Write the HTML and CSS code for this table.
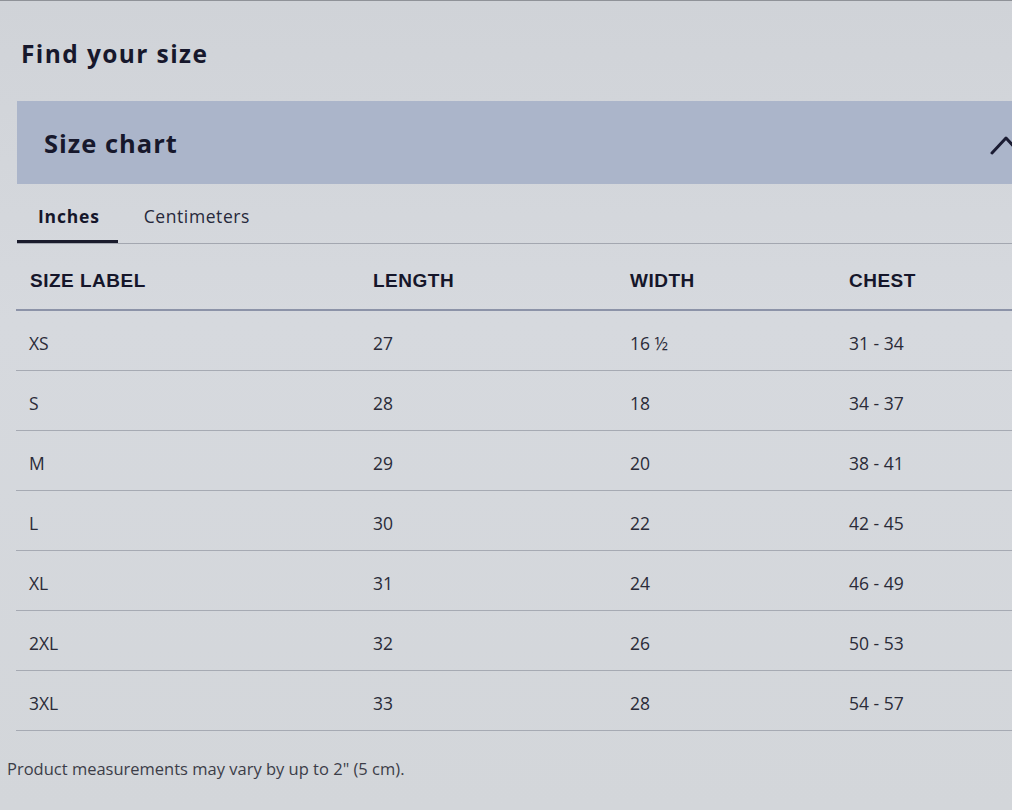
FILE: index.html
```html
<!DOCTYPE html>
<html lang="en">
<head>
<meta charset="utf-8">
<title>Find your size</title>
<link rel="stylesheet" href="styles.css">
</head>
<body>
<div class="page">
  <h1 class="title">Find your size</h1>
  <section class="accordion">
    <div class="acc-head">
      <h2 class="acc-title">Size chart</h2>
      <svg class="chevron" width="22" height="24" viewBox="0 0 22 24" aria-hidden="true">
        <path d="M2 19 L16 4 L30 19" fill="none" stroke="#1b1c33" stroke-width="3" stroke-linecap="round" stroke-linejoin="round"/>
      </svg>
    </div>
    <div class="tabs">
      <div class="tab active">Inches</div>
      <div class="tab">Centimeters</div>
    </div>
    <table class="chart">
      <thead>
        <tr><th class="c1">SIZE LABEL</th><th class="c2">LENGTH</th><th class="c3">WIDTH</th><th class="c4">CHEST</th></tr>
      </thead>
      <tbody>
        <tr><td>XS</td><td>27</td><td>16 ½</td><td>31 - 34</td></tr>
        <tr><td>S</td><td>28</td><td>18</td><td>34 - 37</td></tr>
        <tr><td>M</td><td>29</td><td>20</td><td>38 - 41</td></tr>
        <tr><td>L</td><td>30</td><td>22</td><td>42 - 45</td></tr>
        <tr><td>XL</td><td>31</td><td>24</td><td>46 - 49</td></tr>
        <tr><td>2XL</td><td>32</td><td>26</td><td>50 - 53</td></tr>
        <tr><td>3XL</td><td>33</td><td>28</td><td>54 - 57</td></tr>
      </tbody>
    </table>
  </section>
  <p class="note">Product measurements may vary by up to 2" (5 cm).</p>
</div>
</body>
</html>
```

FILE: styles.css
```css
html, body {
  margin: 0;
  padding: 0;
}
body {
  width: 1012px;
  height: 810px;
  overflow: hidden;
  background: linear-gradient(180deg, #d0d3d8 0%, #d6d9de 40%, #d3d6da 100%);
  color: #17182c;
  font-family: "Open Sans", Lato, sans-serif;
  border-top: 1px solid #8f9298;
  box-sizing: border-box;
}
.page {
  padding-top: 35px;
}
.title {
  margin: 0 0 0 21px;
  font-size: 24.5px;
  line-height: 36px;
  font-weight: 700;
  letter-spacing: 1.4px;
}
.accordion {
  margin: 29px 0 0 17px;
}
.acc-head {
  height: 83px;
  background: #abb5ca;
  display: flex;
  align-items: center;
  justify-content: space-between;
  padding-left: 27px;
}
.acc-title {
  margin: 0;
  font-size: 25.5px;
  font-weight: 700;
  line-height: 32px;
  letter-spacing: 1px;
}
.chevron {
  display: block;
  margin-top: 6px;
}
.tabs {
  display: flex;
  gap: 5px;
  height: 59px;
  border-bottom: 1px solid #a3a7b0;
}
.tab {
  padding: 4px 21px 0;
  display: flex;
  align-items: center;
  font-size: 17.5px;
  letter-spacing: 0.6px;
  color: #26283a;
}
.tab.active {
  padding-right: 18px;
  font-weight: 700;
  letter-spacing: 0.8px;
  color: #15162a;
  box-shadow: inset 0 -3px 0 #1a1b2c;
}
.chart {
  width: 996px;
  border-collapse: collapse;
  margin-left: -1px;
}
.chart th {
  text-align: left;
  font-family: "Liberation Sans", Arial, sans-serif;
  font-weight: 700;
  font-size: 19px;
  letter-spacing: 0.5px;
  height: 56px;
  padding: 9px 0 0 14px;
  border-bottom: 2px solid #8c93a8;
  color: #15162a;
}
.chart .c1 { width: 329px; }
.chart .c2 { width: 243px; }
.chart .c3 { width: 205px; }
.chart td {
  height: 55px;
  padding: 4px 0 0 14px;
  font-size: 17.5px;
  color: #2a2b38;
  border-bottom: 1px solid #a6aab3;
}
.chart td:first-child {
  padding-left: 13px;
}
.note {
  margin: 26px 0 0 7px;
  font-size: 16.5px;
  color: #3c3d48;
}
```
